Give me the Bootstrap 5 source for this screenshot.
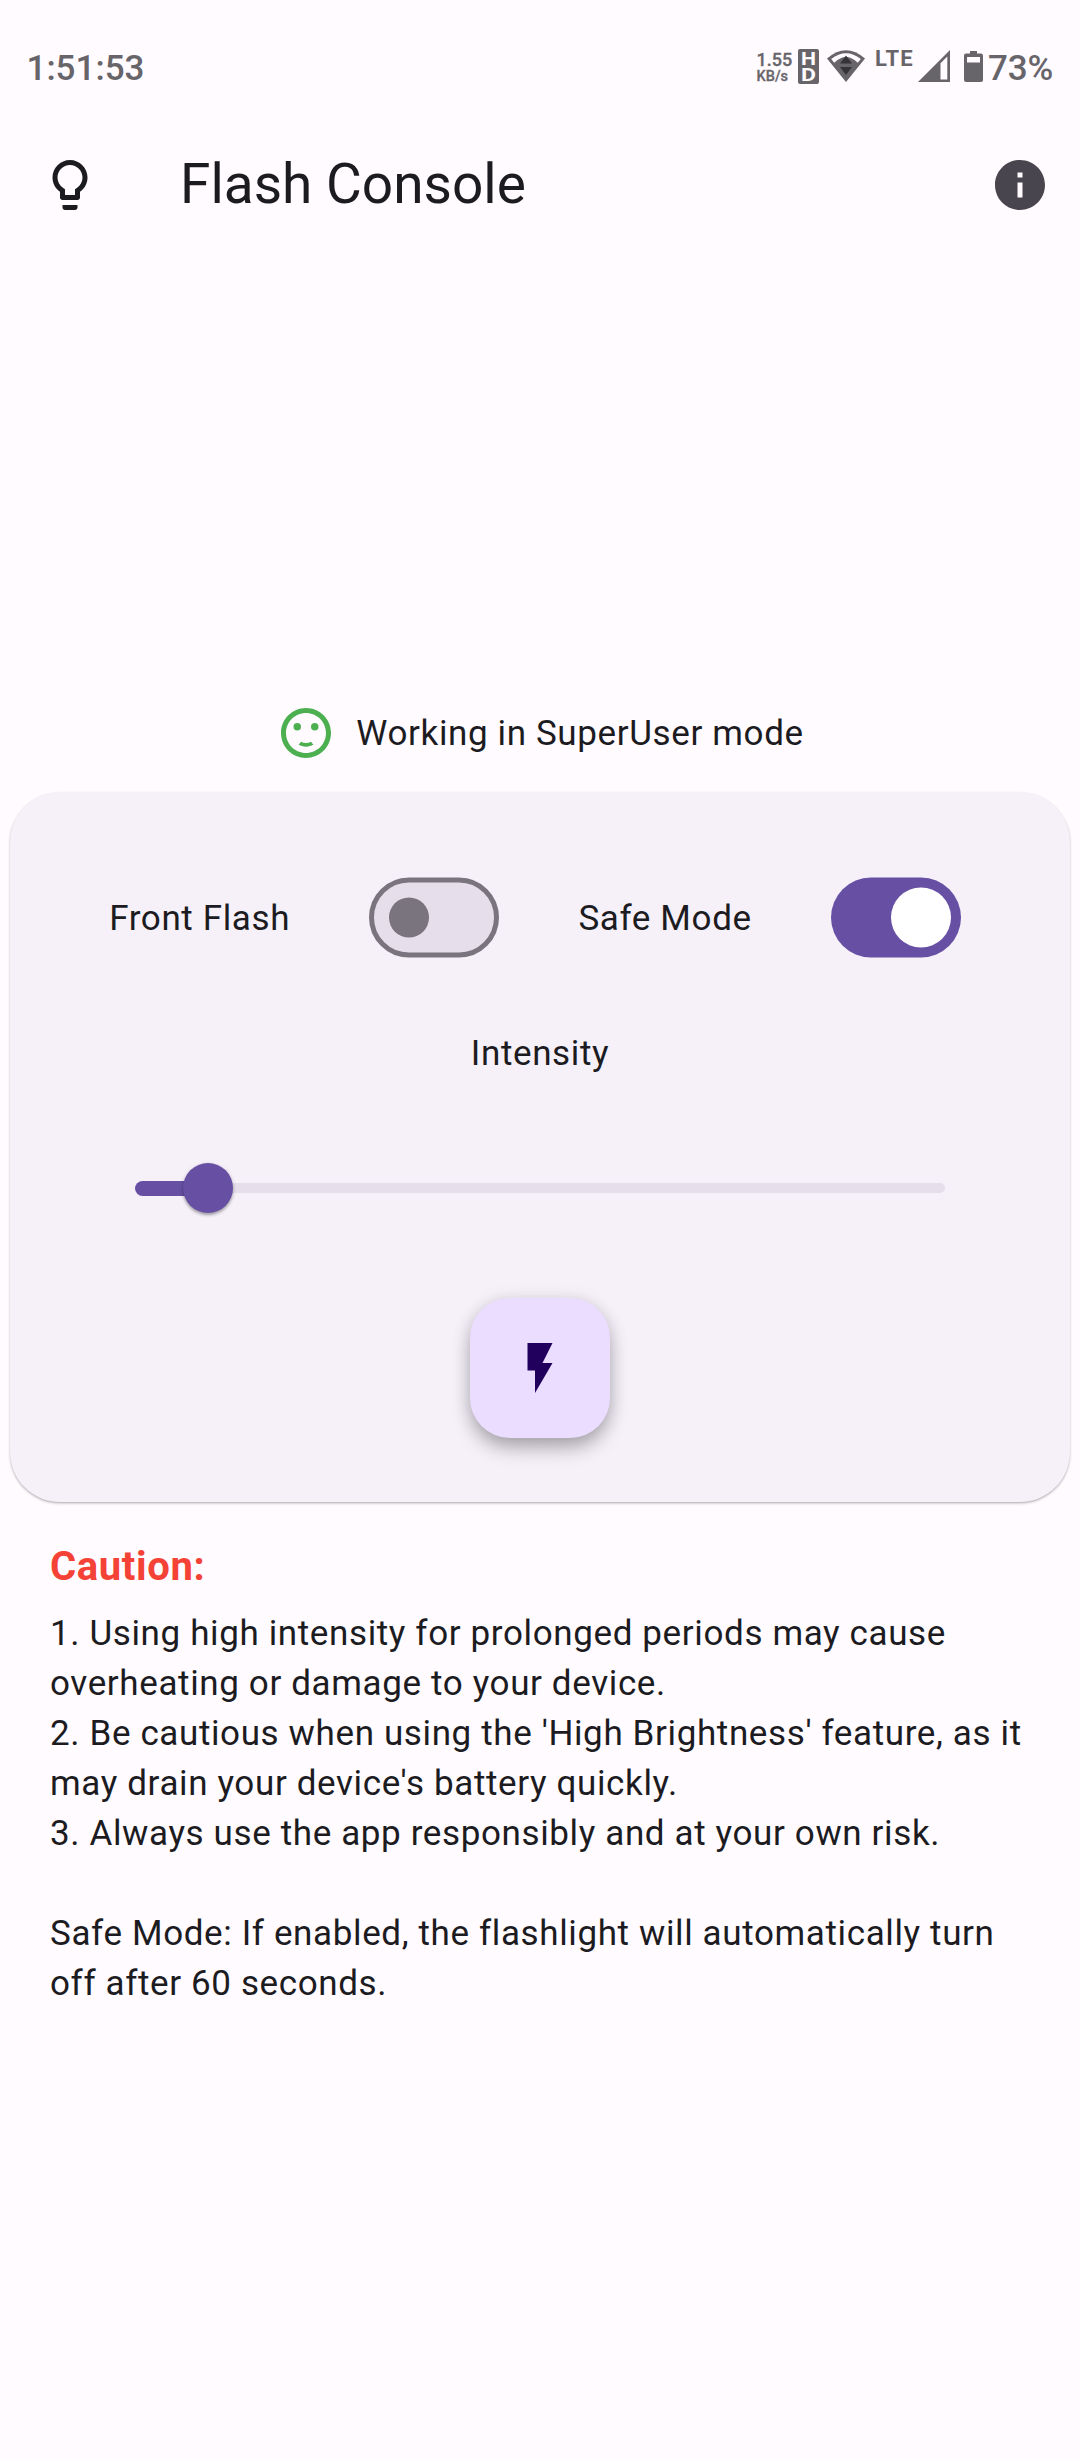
<!DOCTYPE html>
<html lang="en">
<head>
<meta charset="utf-8">
<meta name="viewport" content="width=device-width, initial-scale=1">
<title>Flash Console</title>
<link href="https://cdn.jsdelivr.net/npm/bootstrap@5.3.0/dist/css/bootstrap.min.css" rel="stylesheet">
<style>
  :root { --ink: #1c1b1f; --primary: #6750a4; --status: #68656a; --track: #e6dfeb; --outline: #7a747f; }
  body { background: #fffbff; color: var(--ink); font-family: Roboto, "Liberation Sans", sans-serif; font-size: 35px; line-height: 50px; letter-spacing: .625px; }
  svg { display: block; flex: none; }
  .status-strip { height: 105px; padding: 43px 27px 0 26.5px; color: var(--status); letter-spacing: 0; }
  .clock { font-weight: 500; padding-top: 1px; }
  .net-rate { width: 42px; padding: 9px 0 0 .6px; font-weight: 500; line-height: 16px; -webkit-text-stroke: .3px var(--status); }
  .rate-value { font-size: 18px; }
  .rate-unit { font-size: 14.5px; margin-top: 1px; }
  .hd-icon { margin: 6px 8px 0 0; overflow: visible; }
  .wifi-icon { margin: 7px 9.5px 0 0; }
  .lte-label { width: 43.5px; padding: 5px 0 0 .5px; font-size: 22px; font-weight: 700; letter-spacing: 1.1px; line-height: 22px; }
  .signal-icon { margin: 7px 14px 0 0; }
  .battery-icon { margin: 8px 5px 0 0; }
  .battery-level { width: 65px; padding-top: 1px; font-weight: 500; letter-spacing: -.1px; }
  .app-bar { height: 160px; padding: 0 30px 0 40px; }
  .app-title { font-size: 55px; line-height: 70px; margin-left: 80px; padding-bottom: 2px; letter-spacing: 0; }
  .mode-row { margin-top: 438px; height: 60px; gap: 20px; }
  .row-label { padding-top: 2px; }
  .control-card { margin: 29px 10px 0; height: 710px; padding-top: 85px; border: 0; border-radius: 50px; background: #f6f1f9; color: var(--ink);
    box-shadow: 0 1px 2px rgba(0,0,0,.22), 0 2px 3px rgba(0,0,0,.1); }
  .toggle-row { padding: 0 30px; height: 81px; }
  .toggle-box { width: 150px; padding: 0 10px; }
  .intensity-label { margin-top: 71px; }
  .level-slider { width: 810px; height: 50px; margin: 84px auto 0; }
  .slider-rail { height: 10px; border-radius: 5px; background: var(--track); }
  .slider-fill { height: 15px; border-radius: 7.5px; background: var(--primary); }
  .slider-thumb { width: 50px; height: 50px; margin: 0 -25px; z-index: 1; background: var(--primary); box-shadow: 0 2px 3px rgba(0,0,0,.3), 0 1px 5px rgba(0,0,0,.1); }
  .flash-btn { width: 140px; height: 140px; margin: 85px auto 0; padding: 0; border: 0; border-radius: 40px; background: #eaddff;
    box-shadow: 0 12px 20px -2px rgba(0,0,0,.27), 0 2px 18px rgba(0,0,0,.13); }
  .caution-block { padding: 35px 50px 0; white-space: nowrap; }
  .caution-title { color: #f44336; font-size: 40px; font-weight: 700; line-height: 60px; margin-bottom: 12px; }
</style>
</head>
<body>
<div class="status-strip d-flex justify-content-between align-items-start">
  <div class="clock">1:51:53</div>
  <div class="d-flex align-items-start">
    <div class="net-rate d-flex flex-column"><span class="rate-value">1.55</span><span class="rate-unit">KB/s</span></div>
    <svg class="hd-icon" width="21" height="35" viewBox="0 0 21 35"><rect width="21" height="35" rx="2" fill="#68656a"/>
      <g font-family="Roboto, sans-serif" font-weight="700" font-size="19" letter-spacing="0" fill="#fffbff"><text x="3" y="16" textLength="15" lengthAdjust="spacingAndGlyphs">H</text><text x="3" y="32" textLength="15" lengthAdjust="spacingAndGlyphs">D</text></g></svg>
    <svg class="wifi-icon" width="38" height="32" viewBox="0 0 38 32"><path d="M0 8.600Q19-8 38 8.600L19 32Z" fill="#68656a"/><path d="M4.200 9.100Q19-2.400 33.800 9.100L30.800 12.800Q19 1 7.200 12.800Z" fill="#fffbff"/><path d="M19 5.500l6 8H13zM13 17h12l-6 8z" fill="#353336"/></svg>
    <div class="lte-label">LTE</div>
    <svg class="signal-icon" width="32" height="32" viewBox="0 0 32 32"><path d="M0 32L32 0v32z" fill="#68656a"/><path d="M22.500 13.300L29.300 6.500v23h-6.800z" fill="#fffbff"/></svg>
    <svg class="battery-icon" width="19" height="32" viewBox="0 0 19 32"><path d="M6 0h7v2.500h4a2 2 0 0 1 2 2V29a2 2 0 0 1-2 2H2a2 2 0 0 1-2-2V4.500a2 2 0 0 1 2-2h4z" fill="#68656a"/><path d="M3 6h13v5.500H3z" fill="#fffbff"/></svg>
    <div class="battery-level">73%</div>
  </div>
</div>

<header class="app-bar d-flex align-items-center">
  <svg width="60" height="60" viewBox="0 0 24 24" fill="#1c1b1f"><path d="M9 21c0 .55.45 1 1 1h4c.55 0 1-.45 1-1v-1H9v1zm3-19C8.140 2 5 5.140 5 9c0 2.380 1.190 4.470 3 5.740V17c0 .55.45 1 1 1h6c.55 0 1-.45 1-1v-2.260c1.810-1.270 3-3.360 3-5.740 0-3.860-3.140-7-7-7zm2.850 11.100l-.85.6V16h-4v-2.300l-.85-.6C7.800 12.160 7 10.630 7 9c0-2.760 2.240-5 5-5s5 2.240 5 5c0 1.630-.8 3.160-2.150 4.100z"/></svg>
  <h1 class="app-title fw-normal mb-0">Flash Console</h1>
  <svg class="ms-auto" width="60" height="60" viewBox="0 0 24 24" fill="#49454f"><path d="M12 2C6.480 2 2 6.480 2 12s4.480 10 10 10 10-4.480 10-10S17.520 2 12 2zm1 15h-2v-6h2v6zm0-8h-2V7h2v2z"/></svg>
</header>

<main>
  <div class="mode-row d-flex justify-content-center align-items-center">
    <svg width="60" height="60" viewBox="0 0 24 24" fill="#4caf50"><circle cx="15.500" cy="9.500" r="1.500"/><circle cx="8.500" cy="9.500" r="1.500"/><path d="M12 16c-.73 0-1.380-.18-1.960-.52-.12.140-.86.980-1.010 1.150.86.550 1.870.870 2.970.870 1.110 0 2.120-.33 2.980-.88-.97-1.090-.01-.02-1.010-1.150-.59.350-1.240.530-1.970.530zm-.01-14C6.470 2 2 6.480 2 12s4.470 10 9.990 10C17.520 22 22 17.520 22 12S17.520 2 11.990 2zM12 20c-4.420 0-8-3.580-8-8s3.580-8 8-8 8 3.580 8 8-3.580 8-8 8z"/></svg>
    <div class="row-label">Working in SuperUser mode</div>
  </div>

  <section class="card control-card">
    <div class="toggle-row d-flex justify-content-evenly align-items-center">
      <div class="row-label">Front Flash</div>
      <div class="toggle-box"><svg width="130" height="81" viewBox="0 0 130 81" role="switch" aria-checked="false"><rect x="2.500" y="3" width="125" height="75" rx="37.500" fill="#e6dfeb" stroke="#7a747f" stroke-width="5"/><circle cx="40" cy="40.500" r="20" fill="#7a747f"/></svg></div>
      <div class="row-label">Safe Mode</div>
      <div class="toggle-box"><svg width="130" height="81" viewBox="0 0 130 81" role="switch" aria-checked="true"><rect y=".5" width="130" height="80" rx="40" fill="#6750a4"/><circle cx="90" cy="40.500" r="30" fill="#fff"/></svg></div>
    </div>
    <div class="intensity-label text-center">Intensity</div>
    <div class="level-slider d-flex align-items-center">
      <div class="slider-fill" style="width: 9%"></div>
      <div class="slider-thumb rounded-circle flex-shrink-0"></div>
      <div class="slider-rail flex-grow-1"></div>
    </div>
    <button class="btn flash-btn d-flex align-items-center justify-content-center" type="button" aria-label="Toggle flash">
      <svg width="60" height="60" viewBox="0 0 24 24" fill="#21005d"><path d="M7 2v11h3v9l7-12h-4l4-8z"/></svg>
    </button>
  </section>

  <section class="caution-block">
    <h2 class="caution-title">Caution:</h2>
    <p class="mb-0">1. Using high intensity for prolonged periods may cause<br>overheating or damage to your device.<br>2. Be cautious when using the 'High Brightness' feature, as it<br>may drain your device's battery quickly.<br>3. Always use the app responsibly and at your own risk.<br><br>Safe Mode: If enabled, the flashlight will automatically turn<br>off after 60 seconds.</p>
  </section>
</main>
<script src="https://cdn.jsdelivr.net/npm/bootstrap@5.3.0/dist/js/bootstrap.bundle.min.js"></script>
</body>
</html>
